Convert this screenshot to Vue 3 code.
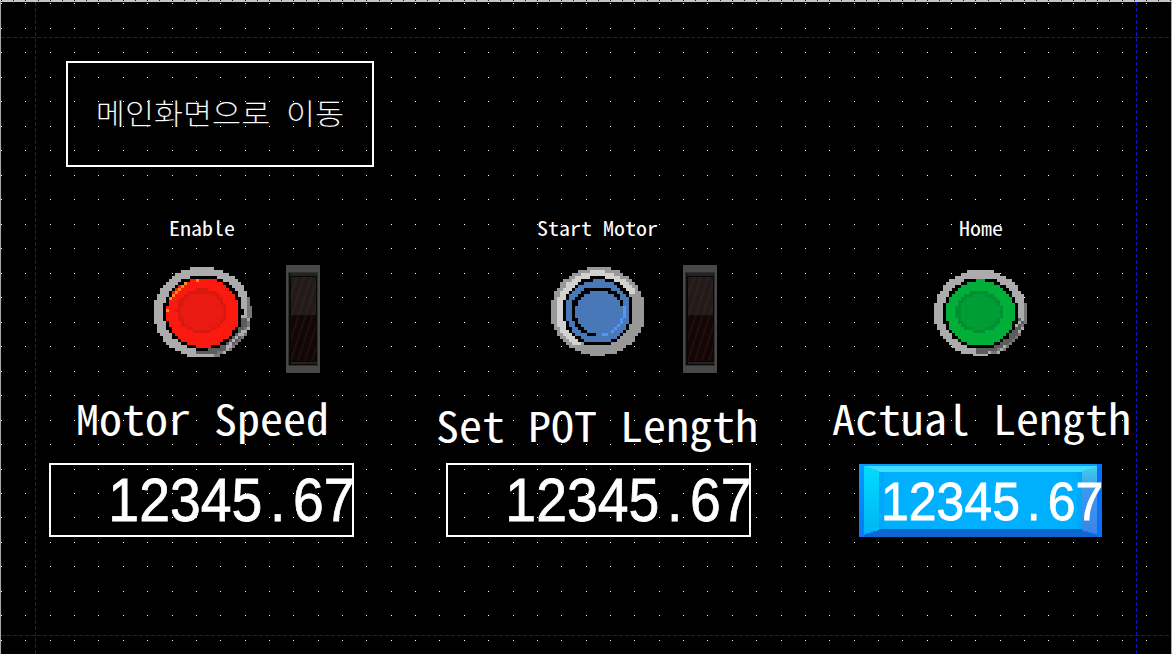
<script setup>
const xs = Array.from({ length: 48 }, (_, i) => Math.round(1 + i * 24.36))
const ys = Array.from({ length: 27 }, (_, i) => Math.round(3.2 + i * 24.49))
const dots = ys.flatMap((y) => xs.map((x) => `M${x} ${y}h1v1h-1z`)).join('')
const ticks = Array.from({ length: 97 }, (_, i) => `M${Math.round(1 + i * 12.18)} 0h1v1h-1z`).join('')

const dashes = (from, to, draw) => {
  let d = ''
  for (let p = from; p < to; p += 6) d += draw(p)
  return d
}
const guides = [37, 635].map((y) => dashes(1, 1168, (x) => `M${x} ${y}h4v1h-4z`)).join('')
  + [35, 1136].map((x) => dashes(2, 654, (y) => `M${x} ${y}h1v4h-1z`)).join('')

const inside = (x, y, cx, cy, rx, ry) => ((x - cx) / rx) ** 2 + ((y - cy) / ry) ** 2 <= 1

// Push buttons are low-resolution bitmaps; each cell is coloured from its centre point.
function bitmap(w, h, cell, colour) {
  const cells = []
  for (let j = 0; j * cell < h; j++) {
    for (let i = 0; i * cell < w; i++) {
      const fill = colour((i + 0.5) * cell, (j + 0.5) * cell, i, j)
      if (fill) cells.push({ x: i * cell, y: j * cell, s: cell, fill })
    }
  }
  return cells
}

function raised(w, h, c) {
  const cx = w / 2
  const cy = h / 2
  return bitmap(w, h, 3, (x, y, i, j) => {
    if (inside(x, y, cx - 1, cy - 1, w * 0.212, h * 0.205)) return c.core
    if (inside(x, y, cx - 1.5, cy - 1.5, w * 0.256, h * 0.245)) return c.groove
    if (inside(x, y, cx, cy, w * 0.37, h * 0.38)) {
      if (c.glint && x < cx && y < cy && !inside(x, y, cx + 1.5, cy + 1.5, w * 0.37, h * 0.37) && (i + j) % 3 === 0) return c.glint
      return c.face
    }
    if (inside(x, y, cx, cy, w * 0.405, h * 0.412)) return '#000'
    if (!inside(x, y, cx, cy, w / 2, h / 2)) return null
    const dx = x - cx
    const dy = y - cy
    if (dx > -w * 0.06 && dy > h * 0.06) {
      if (inside(x, y, cx, cy, w * 0.465, h * 0.465)) return dx > w * 0.22 && (i + j) % 5 === 0 ? '#b0b0b0' : '#5c5c5c'
      if (dx > w * 0.12) return (i + j) % 3 ? '#777' : '#aaa'
    }
    if (dx > w * 0.455) return '#777'
    return '#acacac'
  })
}

function flush(w, h) {
  const cx = w / 2
  const cy = h / 2
  return bitmap(w, h, 3, (x, y) => {
    if (inside(x, y, cx + 1, cy + 1, 23.5, 22.3)) return '#4878b8'
    if (inside(x, y, cx, cy, 27.2, 25)) {
      return x > cx + 4 && y > cy - 6 ? '#5496f4' : '#000'
    }
    if (inside(x, y, cx, cy, 32.5, 31.6)) return '#4878b8'
    if (inside(x, y, cx, cy, 35.3, 34.6)) return '#000'
    if (!inside(x, y, cx, cy, w / 2, h / 2)) return null
    if (x - cx + (y - cy) > 14 && !(y < cy - 18)) return '#989898'
    if (y > cy + 34) return '#989898'
    return inside(x, y, cx, cy, 42.5, 40.5) ? '#d2d2d0' : '#999'
  })
}

const stations = [
  {
    id: 'speed', caption: 'Enable', w: 98, h: 91, lamp: true, title: 'Motor Speed',
    cells: raised(98, 91, { face: '#fc1a10', groove: '#da1810', core: '#e81a12', glint: '#ff8a10' }),
  },
  { id: 'pot', caption: 'Start Motor', w: 94, h: 89, lamp: true, title: 'Set POT Length', cells: flush(94, 89) },
  {
    id: 'actual', caption: 'Home', w: 93, h: 86, lamp: false, title: 'Actual Length',
    cells: raised(93, 86, { face: '#00ae38', groove: '#009032', core: '#009c34' }),
  },
]
</script>

<template>
  <main class="screen">
    <svg class="canvas-grid" width="1172" height="654" shape-rendering="crispEdges">
      <rect width="1172" height="2" fill="#c4c4c4" />
      <path :d="ticks" fill="#222" />
      <rect y="2" width="1" height="652" fill="#a8a8a8" />
      <rect x="1171" y="2" width="1" height="652" fill="#a8a8a8" />
      <path :d="guides" fill="#1010b8" />
      <path :d="dots" fill="#fff" />
    </svg>

    <button class="nav"><span>메인화면으로 이동</span></button>

    <div class="stations">
      <section v-for="s in stations" :key="s.id" class="station" :class="s.id">
        <div class="caption"><span>{{ s.caption }}</span></div>
        <div class="controls">
          <svg class="push" :width="s.w" :height="s.h" shape-rendering="crispEdges">
            <rect v-for="(c, i) in s.cells" :key="i" :x="c.x" :y="c.y" :width="c.s" :height="c.s" :fill="c.fill" />
          </svg>
          <svg v-if="s.lamp" class="lamp" width="34" height="108">
            <defs>
              <pattern :id="'grain-' + s.id" width="7" height="20" patternUnits="userSpaceOnUse" patternTransform="skewX(-18)">
                <rect width="2" height="20" fill="#6a4040" opacity=".16" />
              </pattern>
            </defs>
            <rect width="34" height="108" fill="#484848" />
            <rect x="2" y="7" width="30" height="94" fill="#303030" />
            <rect x="3" y="8" width="28" height="92" fill="#080808" />
            <rect x="4" y="8" width="27" height="3" fill="#222" />
            <rect x="5" y="12" width="25" height="38" fill="#231a1a" />
            <rect x="5" y="50" width="25" height="46" fill="#120606" />
            <rect x="5" y="12" width="25" height="84" :fill="'url(#grain-' + s.id + ')'" />
            <rect x="5" y="97" width="26" height="2" fill="#222" />
          </svg>
        </div>
        <h2 class="title"><span>{{ s.title }}</span></h2>
        <div class="display">
          <svg v-if="s.id === 'actual'" class="bevel" width="243" height="73" shape-rendering="crispEdges">
            <defs>
              <linearGradient id="edge-left" x2="0" y2="1"><stop stop-color="#00dcff" /><stop offset="1" stop-color="#00b4f4" /></linearGradient>
              <linearGradient id="edge-right" x2="0" y2="1"><stop stop-color="#40d0e8" /><stop offset=".35" stop-color="#3a9aec" /><stop offset="1" stop-color="#3c84e8" /></linearGradient>
              <linearGradient id="rim" x2="0" y2="1"><stop stop-color="#089cff" /><stop offset="1" stop-color="#0878f8" /></linearGradient>
            </defs>
            <rect width="243" height="73" fill="url(#rim)" />
            <rect x="238" width="5" height="73" fill="#0870fc" />
            <rect x="20" y="8" width="203" height="57" fill="#00a8fc" />
            <rect x="25" y="8" width="193" height="57" fill="#00b0ff" />
            <path d="M5 2H238V4L223 8H20L5 4z" fill="#40dcff" />
            <path d="M5 2L20 7V66L5 70z" fill="url(#edge-left)" />
            <path d="M238 2L223 7V66L238 70z" fill="url(#edge-right)" />
            <path d="M20 65H223V67L238 71V73H5V71L20 67z" fill="#0c68d0" />
          </svg>
          <span class="value">12345<span class="point">.</span>67</span>
        </div>
      </section>
    </div>
  </main>
</template>

<style>
body {
  background: #000;
}
</style>

<style scoped>
.screen {
  position: relative;
  box-sizing: border-box;
  width: 1172px;
  height: 654px;
  padding: 61px 0 0;
  overflow: hidden;
  background: #000;
  color: #fff;
  font-family: "Noto Sans CJK KR", "Liberation Mono", monospace;
  font-feature-settings: "hwid" 1;
  font-kerning: none;
}
.canvas-grid {
  position: absolute;
  inset: 0;
}
.nav,
.stations {
  position: relative;
}
.nav {
  display: block;
  box-sizing: border-box;
  width: 308px;
  height: 106px;
  margin-left: 66px;
  padding: 0 0 5px;
  border: 2px solid #fff;
  background: transparent;
  color: #fff;
  font: 300 31.6px/40px "Noto Sans CJK KR", sans-serif;
  white-space: nowrap;
}
.nav span {
  display: inline-block;
  font-feature-settings: "hwid" 1;
  transform: scaleY(0.92);
  -webkit-text-stroke: 0.15px #000;
}
.stations {
  display: flex;
  margin-top: 47px;
  padding-left: 49px;
}
.station {
  width: 397px;
  flex: none;
}
.station.actual {
  width: 326px;
}
.caption,
.title,
.value {
  white-space: pre;
}
.caption span,
.title span,
.value {
  display: inline-block;
}
.caption {
  height: 30px;
  padding-left: 120px;
  font-size: 22px;
  line-height: 26px;
}
.caption span {
  transform: scaleY(0.92);
}
.pot .caption {
  padding-left: 91px;
}
.actual .caption {
  padding-left: 116px;
}
.controls {
  display: flex;
  height: 130px;
  padding: 21px 0 0 105px;
  box-sizing: border-box;
}
.push {
  margin-top: 2px;
}
.lamp {
  margin-left: 34px;
}
.pot .lamp {
  margin-left: 38px;
}
.actual .controls {
  padding-left: 91px;
}
.actual .push {
  margin-top: 5px;
}
.title {
  height: 60px;
  margin: 15px 0 0 27px;
  font-size: 46px;
  font-weight: 400;
  line-height: 57px;
}
.pot .title {
  position: relative;
  top: 7px;
  margin-left: -10px;
}
.actual .title {
  margin-left: -11px;
}
.title span {
  transform: scaleY(0.9);
}
.display {
  display: flex;
  justify-content: flex-end;
  align-items: center;
  box-sizing: border-box;
  width: 305px;
  height: 74px;
  margin-top: 14px;
  border: 2px solid #fff;
  font-family: "Liberation Sans", sans-serif;
  font-size: 61.5px;
  line-height: 72px;
}
.value {
  margin-right: -3px;
  transform: scaleX(0.9);
  transform-origin: 100% 50%;
  -webkit-text-stroke: 0.8px #fff;
}
.point {
  display: inline-block;
  width: 0.556em;
  text-align: center;
}
.actual .display {
  position: relative;
  width: 243px;
  height: 73px;
  margin: 15px 0 0 16px;
  border: 0;
  font-size: 54px;
}
.bevel {
  position: absolute;
  inset: 0;
}
.actual .value {
  position: relative;
  margin-right: -1px;
  transform: scaleX(0.925);
}
</style>
